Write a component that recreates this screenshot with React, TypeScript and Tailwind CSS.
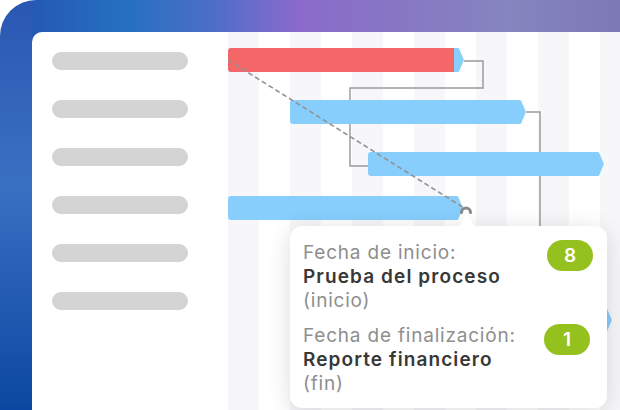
import React from 'react';

const stripes = [0, 62, 124, 186, 248, 310, 372];

// bar with rounded left end and a pointed right end
const barPath = (x1: number, x2: number, y: number, h = 24, r = 3, tip = 6) =>
  `M${x1 + r},${y} H${x2 - tip} Q${x2 - tip + 1},${y} ${x2 - tip + 1.5},${y + 1.5} L${x2 - 0.5},${y + h / 2 - 1} Q${x2},${y + h / 2} ${x2 - 0.5},${y + h / 2 + 1} L${x2 - tip + 1.5},${y + h - 1.5} Q${x2 - tip + 1},${y + h} ${x2 - tip},${y + h} H${x1 + r} Q${x1},${y + h} ${x1},${y + h - r} V${y + r} Q${x1},${y} ${x1 + r},${y} Z`;

const bars = [
  { x1: 0, x2: 236, y: 16 },
  { x1: 62, x2: 298, y: 68 },
  { x1: 140, x2: 376, y: 120 },
  { x1: 0, x2: 235, y: 164 },
  { x1: 327, x2: 384, y: 276 },
];

const GanttChart: React.FC = () => (
  <svg width="392" height="378" viewBox="0 0 392 378" className="block shrink-0">
    {stripes.map((x) => (
      <rect key={x} x={x} y={0} width={31} height={378} fill="#f7f7f9" />
    ))}
    <g fill="none" stroke="#9b9b9b" strokeWidth="1.5">
      <path d="M236,29 H255 V56 H122 V134 H140" />
      <path d="M298,80 H312 V288 H327" />
    </g>
    {bars.map((b, i) => (
      <path key={i} d={barPath(b.x1, b.x2, b.y)} fill="#87cefd" />
    ))}
    <path d="M3,16 H226 V40 H3 Q0,40 0,37 V19 Q0,16 3,16 Z" fill="#f56669" />
    <line x1="0" y1="28" x2="236" y2="176" stroke="#939393" strokeWidth="1.6" strokeDasharray="5 3" />
    <path d="M233.5,180.5 A4.5,4.5 0 1 1 242.5,180.5" fill="none" stroke="#8a8a8a" strokeWidth="3" strokeLinecap="round" />
  </svg>
);

const Badge: React.FC<{ n: string; className?: string }> = ({ n, className }) => (
  <div
    className={`flex h-[31px] w-[46px] shrink-0 items-center justify-center rounded-full bg-[#95c11f] text-[19px] font-semibold tracking-normal text-white ${className ?? ''}`}
  >
    {n}
  </div>
);

const Tooltip: React.FC = () => (
  <div className="absolute left-[290px] top-[226px] flex h-[182px] w-[317px] flex-col gap-[11px] rounded-[12px] bg-white pl-[13px] pr-[14px] pt-[15px] font-['Inter',sans-serif] text-[19px] leading-[24px] tracking-[0.8px] shadow-[0_4px_24px_rgba(0,0,0,0.14)]">
    <svg width="22" height="15" viewBox="0 0 22 15" className="absolute -top-[14px] left-[166px]">
      <path d="M0,15 C7,15 8,1 11,1 C14,1 15,15 22,15 Z" fill="white" />
    </svg>
    <div className="flex items-start justify-between">
      <div>
        <div className="text-[#8e8e8e]">Fecha de inicio:</div>
        <div className="font-semibold tracking-[1.1px] text-[#383838]">Prueba del proceso</div>
        <div className="text-[#8e8e8e]">(inicio)</div>
      </div>
      <Badge n="8" className="-mt-[1px]" />
    </div>
    <div className="flex items-start justify-between">
      <div>
        <div className="text-[#8e8e8e]">Fecha de finalización:</div>
        <div className="font-semibold tracking-[1.1px] text-[#383838]">Reporte financiero</div>
        <div className="text-[#8e8e8e]">(fin)</div>
      </div>
      <Badge n="1" className="mr-[3px]" />
    </div>
  </div>
);

export default function App() {
  return (
    <div className="relative h-[410px] w-[620px] overflow-hidden bg-white">
      <div className="flex h-full w-full rounded-tl-[36px] pl-[32px] pt-[32px] [background:linear-gradient(to_bottom,#2a57b2_0%,#3468bd_30%,#3a70c2_45%,#2c63b9_62%,#0b47a0_100%)_0_0/32px_100%_no-repeat,linear-gradient(to_right,#2551b1_0%,#2570c0_20%,#4f6ec8_35%,#8b6acb_48%,#8777c3_65%,#8585c0_82%,#7d78b6_100%)]">
        <div className="flex flex-1 overflow-hidden rounded-tl-[10px] bg-white">
          <div className="flex w-[196px] shrink-0 flex-col gap-[30px] pl-[20px] pt-[20px]">
            {Array.from({ length: 6 }).map((_, i) => (
              <div key={i} className="h-[18px] w-[136px] rounded-full bg-[#d4d4d4]" />
            ))}
          </div>
          <GanttChart />
        </div>
      </div>
      <Tooltip />
    </div>
  );
}
